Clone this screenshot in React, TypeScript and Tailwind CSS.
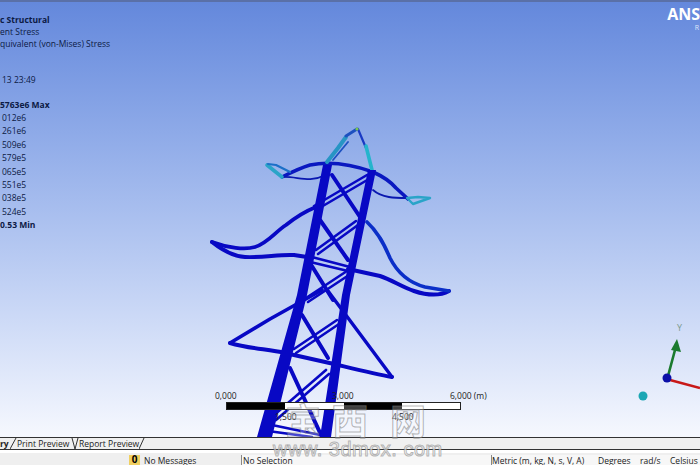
const FONT = "font-['Open_Sans','Liberation_Sans',sans-serif]";

const legendRows = ['012e6', '261e6', '509e6', '579e5', '065e5', '551e5', '038e5', '524e5'];

// cut off on the left in the source picture, so only the visible part of each label is here
function Legend() {
  return (
    <div className="flex flex-col pt-[12px] text-[8.5px] leading-[12px] text-[#0c1a44]">
      <div className="font-bold">c Structural</div>
      <div>ent Stress</div>
      <div>quivalent (von-Mises) Stress</div>
      <div className="mt-[24px] pl-[2px]">13 23:49</div>
      <div className="mt-[13px] font-bold">5763e6 Max</div>
      <div className="flex flex-col gap-[1.4px] pl-[2px] pt-[1px]">
        {legendRows.map((r) => (
          <div key={r}>{r}</div>
        ))}
      </div>
      <div className="mt-[1px] font-bold">0.53 Min</div>
    </div>
  );
}

function Tower() {
  const blue = '#0808c4';
  return (
    <svg className="absolute left-0 top-[-2px]" width="700" height="437" viewBox="0 0 700 437" fill="none" strokeLinejoin="round" strokeLinecap="round">
      {/* cross bracing */}
      <g stroke={blue} strokeWidth="4">
        <path d="M332 175 L360 217" />
        <path d="M320 220 L348 260" />
        <path d="M310 263 L333 300" />
        <path d="M302 315 L328 358" />
        <path d="M328 291 L392 377" strokeWidth="3.4" />
        <path d="M290 368 L322 437" />
      </g>
      {/* doubled members */}
      <g stroke={blue} strokeWidth="2.6">
        <path d="M314 206 L367 175" />
        <path d="M316 210 L369 179" />
        <path d="M316 250 L356 221" />
        <path d="M318 254 L358 225" />
        <path d="M306 298 L347 271" />
        <path d="M308 302 L349 275" />
        <path d="M294 349 L337 320" />
        <path d="M296 353 L339 324" />
        <path d="M273 416 L326 370" />
        <path d="M276 420 L329 374" />
        <path d="M272 425 L325 436" />
        <path d="M268 431 L312 437" />
        <path d="M308 256 L350 267" />
        <path d="M306 261 L348 271" />
      </g>
      {/* mid arms */}
      <path d="M212 242 C228 248 245 250 255 247 C268 243 275 232 286 225 C296 217 306 211 316 207" stroke={blue} strokeWidth="3.8" />
      <path d="M212 242 C222 250 232 256 245 257 C262 258 280 254 294 255 L307 257" stroke={blue} strokeWidth="4" />
      <path d="M348 269 L380 276 C392 280 402 287 414 291 C426 295 438 297 449 291" stroke={blue} strokeWidth="4" />
      <path d="M367 222 C378 232 384 244 390 258 C398 274 410 283 425 287 L449 291" stroke="#0b2fc8" strokeWidth="3.6" />
      {/* lower arms */}
      <path d="M230 343 L270 319 L322 290" stroke={blue} strokeWidth="3.6" />
      <path d="M230 343 C250 349 268 349 285 353 L334 364 C355 369 375 374 392 377" stroke={blue} strokeWidth="4" />
      {/* top arms and peak */}
      <path d="M282 177 C290 173 300 168 310 165 C325 162 345 162 373 172 C382 176 390 181 396 188 L408 199" stroke="#0a18c0" strokeWidth="3.6" />
      <path d="M282 177 C296 176 310 183 323 176" stroke="#0a18b0" strokeWidth="1.8" />
      <path d="M373 190 C382 198 395 198 407 198" stroke="#0a18b0" strokeWidth="1.8" />
      <path d="M267 165 L282 177" stroke="#2aa4c8" strokeWidth="3.6" />
      <path d="M268 164 L276 165 L290 172" stroke="#1c70c8" strokeWidth="2.2" />
      <path d="M407 198 L413 204 L430 198 L418 197 L407 198" stroke="#2aa4c8" strokeWidth="2.4" />
      <path d="M327 162 L338 148 L346 137" stroke="#2795c4" strokeWidth="4" />
      <path d="M333 160 L348 142" stroke="#1c50c0" strokeWidth="1.8" />
      <path d="M346 136 L357 129" stroke="#1c50c0" strokeWidth="3" />
      <path d="M358 129 L366 148" stroke="#1a3ac4" strokeWidth="2.2" />
      <path d="M366 146 L372 170" stroke="#25b4cc" strokeWidth="3.6" />
      <circle cx="357" cy="129" r="1.6" fill="#7cc850" />
      {/* main legs */}
      <path d="M323 165 L332 165 L307 295 L272 437 L257 437 L297 295 Z" fill={blue} />
      <path d="M368 170 L376 170 L350 295 L331 437 L320 437 L342 295 Z" fill={blue} />
      {/* triad */}
      <path d="M670 380 L700 388" stroke="#c81818" strokeWidth="2.6" strokeLinecap="butt" />
      <path d="M668 376 L675 350" stroke="#1a7a2e" strokeWidth="2.6" />
      <path d="M677 339 L671 350 L681 352 Z" fill="#1a7a2e" />
      <circle cx="667" cy="378" r="4.5" fill="#0b0fa8" />
      <circle cx="643" cy="396" r="4.5" fill="#1ca7b4" />
    </svg>
  );
}

function ScaleBar() {
  return (
    <div className="absolute left-[226px] top-[388px] w-[235px] text-[8.5px] leading-[11px] text-[#222]">
      <div className="relative h-[12px]">
        <span className="absolute left-[-11px] top-0">0,000</span>
        <span className="absolute left-[106px] top-0">3,000</span>
        <span className="absolute left-[224px] top-0 whitespace-nowrap">6,000 (m)</span>
      </div>
      <div className="grid h-[8px] grid-cols-4 border border-[#222]">
        <div className="bg-black" />
        <div className="bg-white" />
        <div className="bg-black" />
        <div className="bg-white" />
      </div>
      <div className="relative h-[12px]">
        <span className="absolute left-[49px] top-[1px]">1,500</span>
        <span className="absolute left-[166px] top-[1px]">4,500</span>
      </div>
    </div>
  );
}

function TabBar() {
  return (
    <div className="flex h-[13px] items-center whitespace-nowrap border-y border-[#333] bg-[#f0f0f0] text-[8.5px] leading-[11px] text-[#222]">
      <span className="w-[10px] font-bold">ry</span>
      <svg width="7" height="11" viewBox="0 0 7 11" fill="none" stroke="#333"><path d="M0 11 L6 0" /></svg>
      <span className="w-[54px]">Print Preview</span>
      <svg width="8" height="11" viewBox="0 0 8 11" fill="none" stroke="#333"><path d="M1 0 L4 11 M4 11 L7 0" /></svg>
      <span className="w-[60px]">Report Preview</span>
      <svg width="6" height="11" viewBox="0 0 6 11" fill="none" stroke="#333"><path d="M0 11 L5 0" /></svg>
    </div>
  );
}

function StatusBar() {
  return (
    <div className="flex h-[15px] flex-col overflow-hidden bg-white">
      <div className="h-[3px] shrink-0" />
      <div className="flex h-[14px] shrink-0 items-start whitespace-nowrap bg-[#efefef] pt-[2px] text-[8.5px] leading-[12px] text-[#222]">
        <div className="h-full w-[127px]" />
        <div className="flex h-full w-[114px] items-start pl-[2px]">
          <div className="flex h-[10px] w-[11px] justify-center bg-[#f0d060] text-[10px] font-bold leading-[9px] text-black">0</div>
          <span className="ml-[4px]">No Messages</span>
        </div>
        <div className="h-full w-[250px] border-l border-[#888] bg-[#f7f7f7] pl-[1px]">No Selection</div>
        <div className="flex h-full flex-1 border-l border-[#888] bg-[#f7f7f7]">
          <span className="w-[106px]">Metric (m, kg, N, s, V, A)</span>
          <span className="w-[42px]">Degrees</span>
          <span className="w-[30px]">rad/s</span>
          <span>Celsius</span>
        </div>
      </div>
    </div>
  );
}

function Watermark() {
  const outline = "[-webkit-text-stroke:1px_rgba(120,120,120,0.55)]";
  return (
    <div className="absolute left-[270px] top-[399px] flex flex-col items-start">
      <div className={`${outline} flex pl-[15px] font-['Noto_Sans_CJK_SC',sans-serif] text-[36px] font-bold leading-[40px] text-white/25`}>
        <span className="mr-[11px]">宝</span>
        <span className="mr-[22px]">西</span>
        <span>网</span>
      </div>
      <div className={`${outline} whitespace-nowrap pl-[3px] font-['Liberation_Sans',sans-serif] text-[20px] leading-[20px] tracking-[0.5px] text-white/70`}>www. 3dmox. com</div>
    </div>
  );
}

export default function App() {
  return (
    <div className={`${FONT} relative flex h-[465px] w-[700px] flex-col overflow-hidden bg-white`}>
      <div className="relative h-[437px] border-t-2 border-[#5a70a8] bg-gradient-to-b from-[#6488dc] to-[#f6f8fe]">
        <Legend />
        <Tower />
        <ScaleBar />
        <div className="absolute right-0 top-[2px] text-[16px] font-bold leading-[20px] text-white">ANS</div>
        <div className="absolute right-[1px] top-[21px] text-[7px] leading-[9px] text-[#dfe6fa]">R</div>
        <div className="absolute left-[677px] top-[321px] text-[9px] leading-[10px] text-[#7c9a90]">Y</div>
      </div>
      <TabBar />
      <StatusBar />
      <Watermark />
    </div>
  );
}
